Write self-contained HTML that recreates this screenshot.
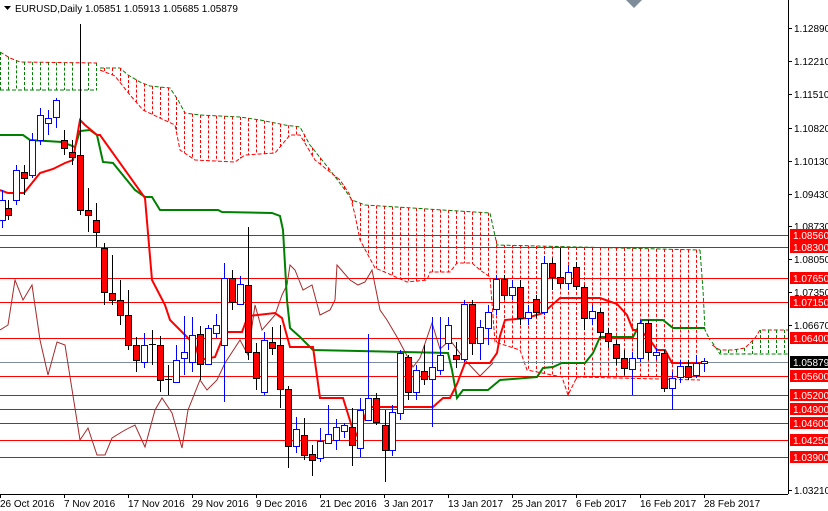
<!DOCTYPE html>
<html><head><meta charset="utf-8"><style>
html,body{margin:0;padding:0;background:#fff;width:828px;height:511px;overflow:hidden}
svg{display:block}
text{font-family:"Liberation Sans",sans-serif;font-size:10px}
</style></head><body>
<svg id="s" width="828" height="511" xmlns="http://www.w3.org/2000/svg">
<rect width="828" height="511" fill="#fff"/>
<g id="cloud"></g>
<g id="hl"></g>
<rect x="0" y="362" width="788" height="1" fill="#7f8c9a"/>
<polyline id="chikou" fill="none" stroke="#a52a2a" stroke-width="1" points="0,330 8,325 15,280 23,300 32,285 40,340 48,375 57,342 65,345 80,440 88,428 97,455 105,455 112,438 125,430 135,425 145,447 155,410 162,398 172,413 182,448 188,410 200,380 207,390 217,380 225,363 240,340 248,355 255,305 262,330 275,315 282,295 287,285 290,265 295,270 303,290 312,285 320,315 330,310 335,300 337,265 350,280 358,285 365,282 372,270 380,310 387,320 397,337 413,367 420,358 432,323 440,349 450,340 465,360 480,376 493,363"/>
<polyline fill="none" stroke="#008000" stroke-width="2" points="0,135 23,135 30,140 62,142 75,147 80,131 90,130 97,135 103,162 113,163 135,190 145,197 152,197 160,210 218,210 222,212 272,213 280,216 283,230 287,300 290,328 300,337 313,350 448,353 452,370 457,398 463,390 488,390 500,380 537,377 543,368 553,367 562,363 585,363 593,353 600,337 633,337 642,320 663,320 673,328 705,328"/>
<polyline fill="none" stroke="#ff0000" stroke-width="2" points="0,190 8,193 24,193 40,173 53,169 65,163 73,160 80,120 85,125 97,135 100,135 145,198 152,280 165,305 170,320 185,335 195,345 200,360 215,357 225,332 242,332 248,316 275,313 282,318 290,347 313,347 320,398 343,398 352,427 358,437 367,410 370,407 433,407 443,398 450,398 457,384 465,363 490,363 497,353 500,336 505,320 527,318 543,313 560,298 600,298 617,304 627,315 633,330 640,330 650,340 657,350 665,350 672,363 707,363"/>
<g id="candles"></g>
<rect x="788" y="0" width="40" height="511" fill="#fff"/>
<line x1="788.5" y1="0" x2="788.5" y2="494" stroke="#000"/>
<line x1="0" y1="494.5" x2="788" y2="494.5" stroke="#000"/>
<g id="ax"></g>
<polygon points="626,0 642,0 634,8" fill="#7f8c9a"/>
<polygon points="4,6 11,6 7.5,10" fill="#000"/>
<text x="15" y="12" fill="#000">EURUSD,Daily  1.05851 1.05913 1.05685 1.05879</text>
<g fill="#000">
<text x="794" y="32">1.12890</text><text x="794" y="65">1.12210</text><text x="794" y="98">1.11510</text>
<text x="794" y="132">1.10820</text><text x="794" y="165">1.10130</text><text x="794" y="198">1.09430</text>
<text x="794" y="230">1.08730</text><text x="794" y="263">1.08050</text><text x="794" y="296">1.07350</text>
<text x="794" y="329">1.06670</text><text x="794" y="494">1.03210</text>
</g>
<g id="boxes"></g>
<g fill="#000">
<text x="0" y="507">26 Oct 2016</text><text x="64" y="507">7 Nov 2016</text><text x="128" y="507">17 Nov 2016</text>
<text x="192" y="507">29 Nov 2016</text><text x="256" y="507">9 Dec 2016</text><text x="320" y="507">21 Dec 2016</text>
<text x="384" y="507">3 Jan 2017</text><text x="448" y="507">13 Jan 2017</text><text x="512" y="507">25 Jan 2017</text>
<text x="576" y="507">6 Feb 2017</text><text x="640" y="507">16 Feb 2017</text><text x="704" y="507">28 Feb 2017</text>
</g>
</svg>
<script>
var NS="http://www.w3.org/2000/svg";
function el(p,t,a){var e=document.createElementNS(NS,t);for(var k in a)e.setAttribute(k,a[k]);document.getElementById(p).appendChild(e);return e;}
function interp(pts,x){for(var i=0;i<pts.length-1;i++){var a=pts[i],b=pts[i+1];if(x>=a[0]&&x<=b[0]){return a[1]+(b[1]-a[1])*(x-a[0])/((b[0]-a[0])||1);}}return pts[pts.length-1][1];}
function cloud(up,lo,x0,x1,col,ucol,lcol){
 el("cloud","polyline",{points:up.map(p=>p.join(",")).join(" "),fill:"none",stroke:ucol,"stroke-width":1,"stroke-dasharray":"4,2"});
 el("cloud","polyline",{points:lo.map(p=>p.join(",")).join(" "),fill:"none",stroke:lcol,"stroke-width":1,"stroke-dasharray":"4,2"});
 for(var x=x0;x<=x1;x+=8){var a=interp(up,x),b=interp(lo,x);el("cloud","line",{x1:x+.5,y1:a,x2:x+.5,y2:b,stroke:col,"stroke-width":1,"stroke-dasharray":"3,2"});}
}
cloud([[0,52],[10,58],[20,62],[97,63]],[[0,90],[97,90]],0,96,"#008000","#ff0000","#008000");
cloud([[100,68],[120,68],[128,75],[140,82],[150,86],[170,88],[178,100],[185,113],[200,115],[240,117],[260,120],[285,125],[300,127],[310,145],[330,170],[345,190],[352,200],[365,205],[490,213],[497,245],[700,250]],
 [[100,70],[115,76],[130,95],[143,110],[160,118],[175,125],[180,150],[195,160],[235,162],[245,155],[275,153],[290,135],[300,135],[315,160],[340,180],[350,195],[355,215],[360,240],[375,268],[387,273],[407,282],[427,280],[430,272],[450,272],[457,263],[472,263],[480,270],[490,277],[495,342],[520,350],[527,370],[562,377],[568,395],[577,377],[700,380]],104,700,"#ff0000","#008000","#ff0000");
el("cloud","polyline",{points:"700,250 703,290 705,330 710,340",fill:"none",stroke:"#008000","stroke-dasharray":"4,2"});
cloud([[712,345],[720,350],[733,350],[745,348],[755,338],[760,330],[790,330]],[[712,342],[720,354],[790,354]],720,784,"#008000","#ff0000","#008000");
[235,247,278,302,338,376,395,409,423,440,457].forEach(function(y){el("hl","rect",{x:0,y:y,width:788,height:1,fill:"#ff0000"});});
var C=[[2,200,220,190,228,1],[8,208,215,200,220,0],[16,170,200,165,205,1],[24,172,178,165,195,0],[32,140,175,133,178,1],[40,115,140,108,145,1],[48,118,123,110,135,1],[56,100,117,98,128,1],[64,140,148,130,155,0],[72,152,157,140,165,0],[80,155,210,24,215,0],[88,210,215,188,232,0],[96,220,232,203,247,0],[104,248,292,243,305,0],[112,293,300,255,305,0],[120,300,315,280,325,0],[128,315,345,290,350,0],[136,345,360,337,372,0],[144,345,362,333,368,1],[152,344,346,330,365,2],[160,345,380,336,392,0],[168,379,381,365,395,2],[176,360,382,345,382,1],[184,352,358,316,375,1],[192,335,362,317,372,1],[200,334,364,326,380,0],[208,328,364,325,365,1],[216,325,333,314,338,1],[224,278,345,263,402,1],[232,278,302,270,310,0],[240,284,304,276,305,1],[248,285,352,227,360,0],[256,352,378,343,390,0],[264,340,392,332,395,1],[272,342,348,327,355,0],[280,345,389,325,408,0],[288,389,446,386,468,0],[296,429,446,417,453,1],[304,435,455,418,460,0],[312,454,460,445,476,0],[320,441,458,428,462,1],[328,434,443,405,443,1],[336,427,440,419,450,1],[344,425,431,423,438,1],[352,427,445,408,466,0],[360,410,448,398,457,1],[368,398,420,334,420,1],[376,398,422,393,425,0],[385,425,450,410,482,0],[392,412,450,405,456,1],[400,353,413,350,420,1],[408,357,392,355,400,0],[416,370,392,365,400,1],[424,371,379,345,385,0],[432,367,379,317,427,1],[440,355,370,317,375,1],[448,325,343,317,350,1],[456,355,359,342,368,0],[464,304,359,300,362,1],[472,304,343,300,355,0],[480,327,343,320,360,1],[488,312,328,305,345,1],[496,279,309,275,315,1],[504,279,295,275,300,0],[512,287,295,280,300,1],[520,287,318,280,325,0],[528,312,318,305,325,1],[536,299,312,295,318,0],[544,263,312,256,315,1],[552,263,277,258,290,0],[560,277,283,248,288,0],[568,272,283,265,290,1],[576,267,286,262,290,0],[584,287,318,285,330,0],[592,311,318,305,325,1],[600,312,332,308,338,0],[608,333,341,328,348,0],[616,344,358,340,365,0],[624,358,368,350,375,0],[632,358,369,352,395,1],[640,323,358,320,362,1],[648,323,352,320,360,0],[656,352,355,348,360,1],[664,353,388,350,392,0],[672,378,388,372,410,1],[680,366,377,360,383,1],[688,366,377,360,380,0],[696,363,375,355,378,1],[704,361,363,358,372,1]];
C.forEach(function(c){var col=c[5]==1?"#0000ff":"#000";
 el("candles","line",{x1:c[0]+.5,y1:c[3],x2:c[0]+.5,y2:c[4],stroke:col});
 if(c[5]==2){el("candles","line",{x1:c[0]-3,y1:c[1]+.5,x2:c[0]+4,y2:c[1]+.5,stroke:"#000"});return;}
 var h=Math.max(1,c[2]-c[1]);
 el("candles","rect",{x:c[0]-2.5,y:c[1]+.5,width:6,height:h,fill:c[5]==1?"#fff":"#ff0000",stroke:col,"stroke-width":1});
});
[28,61,94,128,161,194,226,259,292,325,490].forEach(function(y){el("ax","line",{x1:788,y1:y+.5,x2:792,y2:y+.5,stroke:"#000"});});
[0,64,128,192,256,320,384,448,512,576,640,704].forEach(function(x){el("ax","line",{x1:x+.5,y1:494,x2:x+.5,y2:498,stroke:"#000"});});
var B=[[235,"1.08560"],[247,"1.08300"],[278,"1.07650"],[302,"1.07150"],[338,"1.06400"],[362,"1.05879"],[376,"1.05600"],[395,"1.05200"],[409,"1.04900"],[423,"1.04600"],[440,"1.04250"],[457,"1.03900"]];
B.forEach(function(b){var bk=b[1]=="1.05879";
 el("boxes","rect",{x:790,y:b[0]-6,width:38,height:12,fill:bk?"#000":"#ff0000"});
 var t=el("boxes","text",{x:793,y:b[0]+4,fill:"#fff"});t.textContent=b[1];});
</script>
</body></html>
